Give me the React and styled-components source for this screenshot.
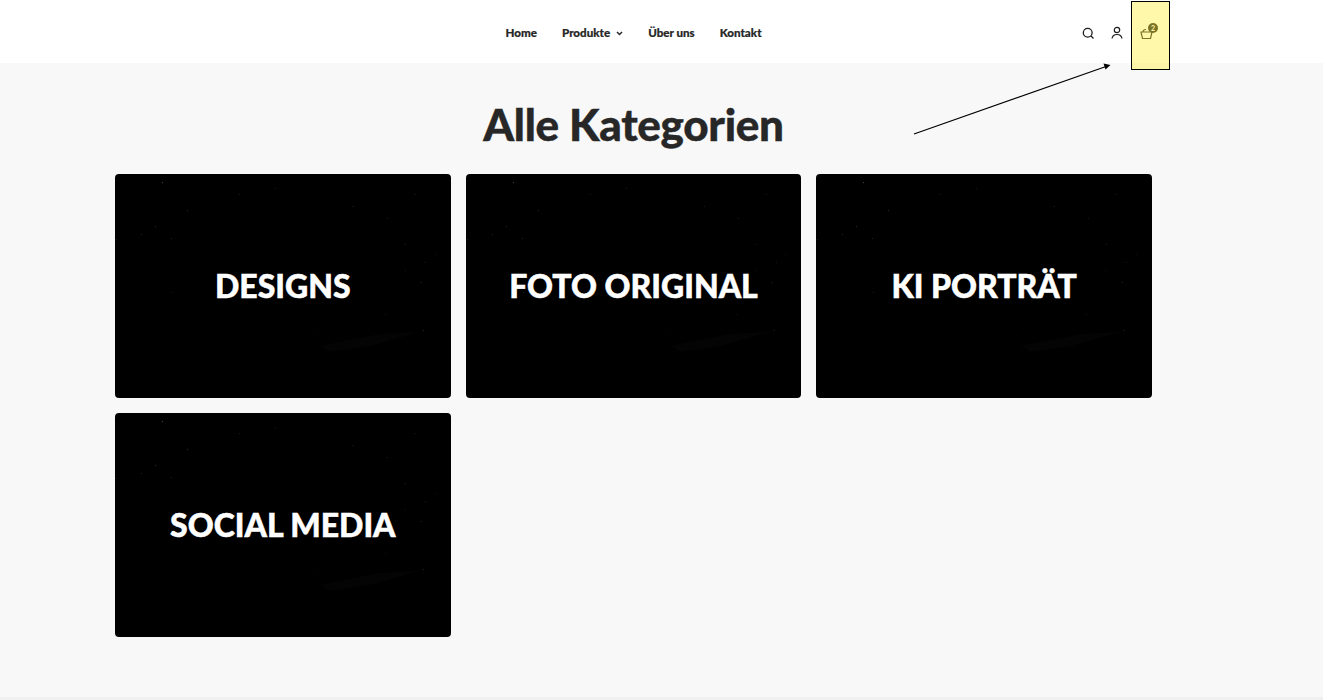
import React from "react";
import styled, { createGlobalStyle } from "styled-components";

const Global = createGlobalStyle`
  html, body { margin: 0; padding: 0; background: #f8f8f8; height: 100%; overflow: hidden; }
  body { font-family: "Lato", "Liberation Sans", sans-serif; color: #272727; }
`;

const Page = styled.div`
  position: relative;
  width: 1323px;
  height: 700px;
  overflow: hidden;
  display: flex;
  flex-direction: column;
`;

const Header = styled.header`
  height: 63px;
  flex: none;
  background: #fff;
  display: grid;
  grid-template-columns: 1fr auto 1fr;
  align-items: center;
  width: 1267px;
  box-shadow: 56px 0 0 #fff;
`;

const Nav = styled.nav`
  grid-column: 2;
  display: flex;
  align-items: center;
  gap: 25px;
  padding-top: 3px;
`;

const NavLink = styled.a`
  display: inline-flex;
  align-items: center;
  gap: 6px;
  font-size: 11.6px;
  font-weight: 900;
  line-height: 16px;
  color: #272727;
  -webkit-text-stroke: 0.2px #272727;
`;

const Actions = styled.div`
  grid-column: 3;
  justify-self: end;
  display: flex;
  align-items: center;
  gap: 15px;
  margin-right: 112px;
  padding-top: 3px;
`;

const IconButton = styled.span`
  display: inline-flex;
  width: 14px;
  height: 14px;
  position: relative;
  color: #1c1c1c;
`;

const CartIcon = styled(IconButton)`
  width: 16px;
`;

const Badge = styled.span`
  position: absolute;
  top: -3px;
  right: -3px;
  width: 10px;
  height: 10px;
  border-radius: 50%;
  background: #1c1c1c;
  color: #fff;
  font-size: 7px;
  font-weight: 700;
  line-height: 10px;
  text-align: center;
`;

const Main = styled.main`
  flex: 1;
  width: 1267px;
  box-sizing: border-box;
  padding: 0 115px;
  display: flex;
  flex-direction: column;
  align-items: center;
`;

const Title = styled.h1`
  margin: 32px 0 21px;
  height: 58px;
  font-size: 44px;
  line-height: 58px;
  font-weight: 900;
  letter-spacing: -0.3px;
  color: #272727;
  text-align: center;
  -webkit-text-stroke: 0.4px #272727;
`;

const Grid = styled.div`
  width: 1037px;
  display: grid;
  grid-template-columns: repeat(3, 1fr);
  grid-auto-rows: 224px;
  gap: 15px;
`;

const Card = styled.a`
  position: relative;
  display: flex;
  align-items: center;
  justify-content: center;
  background: #000;
  border-radius: 4px;
  overflow: hidden;
`;

const Specks = styled.svg`
  position: absolute;
  inset: 0;
  width: 100%;
  height: 100%;
`;

const CardTitle = styled.span`
  position: relative;
  font-size: 32px;
  line-height: 40px;
  font-weight: 900;
  color: #fff;
  letter-spacing: 0;
  margin-top: -1px;
  -webkit-text-stroke: 0.5px #fff;
`;

const FooterEdge = styled.div`
  height: 3px;
  flex: none;
  background: #f0f0f0;
`;

const Highlight = styled.div`
  position: absolute;
  left: 1131px;
  top: 1px;
  width: 39px;
  height: 68.5px;
  box-sizing: border-box;
  border: 1.5px solid #000;
  background: rgba(255, 235, 50, 0.42);
`;

const Arrow = styled.svg`
  position: absolute;
  left: 905px;
  top: 55px;
  width: 215px;
  height: 90px;
`;

const dots = [
  [47, 8, 0.5], [72, 36, 0.3], [40, 52, 0.3], [124, 20, 0.2], [160, 14, 0.2], [238, 32, 0.25], [300, 20, 0.2],
  [56, 64, 0.25], [26, 60, 0.25], [1, 65, 0.2], [290, 70, 0.2], [310, 88, 0.2], [272, 44, 0.2], [320, 80, 0.15],
  [306, 108, 0.25], [290, 96, 0.15], [308, 156, 0.3], [270, 140, 0.15], [200, 160, 0.1], [57, 118, 0.2],
];

const categories = ["DESIGNS", "FOTO ORIGINAL", "KI PORTRÄT", "SOCIAL MEDIA"];

export default function App() {
  return (
    <Page>
      <Global />
      <Header>
        <Nav>
          <NavLink>Home</NavLink>
          <NavLink>
            Produkte
            <svg width="7" height="5" viewBox="0 0 7 5" fill="none" stroke="#272727" strokeWidth="1.5">
              <path d="M1 1l2.5 2.500L6 1" />
            </svg>
          </NavLink>
          <NavLink>Über uns</NavLink>
          <NavLink>Kontakt</NavLink>
        </Nav>
        <Actions>
          <IconButton>
            <svg width="14" height="14" viewBox="0 0 14 14" fill="none" stroke="currentColor" strokeWidth="1.3">
              <circle cx="6.7" cy="6.7" r="4.400" />
              <path d="M10 10l2.500 2.500" />
            </svg>
          </IconButton>
          <IconButton>
            <svg width="14" height="14" viewBox="0 0 14 14" fill="none" stroke="currentColor" strokeWidth="1.2">
              <circle cx="7" cy="4" r="2.700" />
              <path d="M2 12.500c.5-2.800 2.300-4 5-4s4.500 1.200 5 4" />
            </svg>
          </IconButton>
          <CartIcon>
            <svg width="16" height="14" viewBox="0 0 16 14" fill="none" stroke="currentColor" strokeWidth="1.2">
              <path d="M2 6h11l-1.500 6.500H3.500z" />
              <path d="M4 6c0-1.500 1-2.500 3-2.500" />
            </svg>
            <Badge>2</Badge>
          </CartIcon>
        </Actions>
      </Header>
      <Main>
        <Title>Alle Kategorien</Title>
        <Grid>
          {categories.map((name) => (
            <Card key={name}>
              <Specks viewBox="0 0 336 224" aria-hidden="true">
                {dots.map(([x, y, o], i) => (
                  <rect key={i} x={x} y={y} width="1" height="1" fill="#8f96a8" opacity={o} />
                ))}
                <path d="M205 172l60-12 40-2-50 14-40 6z" fill="#040404" />
              </Specks>
              <CardTitle>{name}</CardTitle>
            </Card>
          ))}
        </Grid>
      </Main>
      <FooterEdge />
      <Highlight />
      <Arrow viewBox="0 0 215 90" fill="none">
        <path d="M9 79L201 11.500" stroke="#000" strokeWidth="1.200" />
        <path d="M205.500 10l-7 -1.500 2 6z" fill="#000" />
      </Arrow>
    </Page>
  );
}
